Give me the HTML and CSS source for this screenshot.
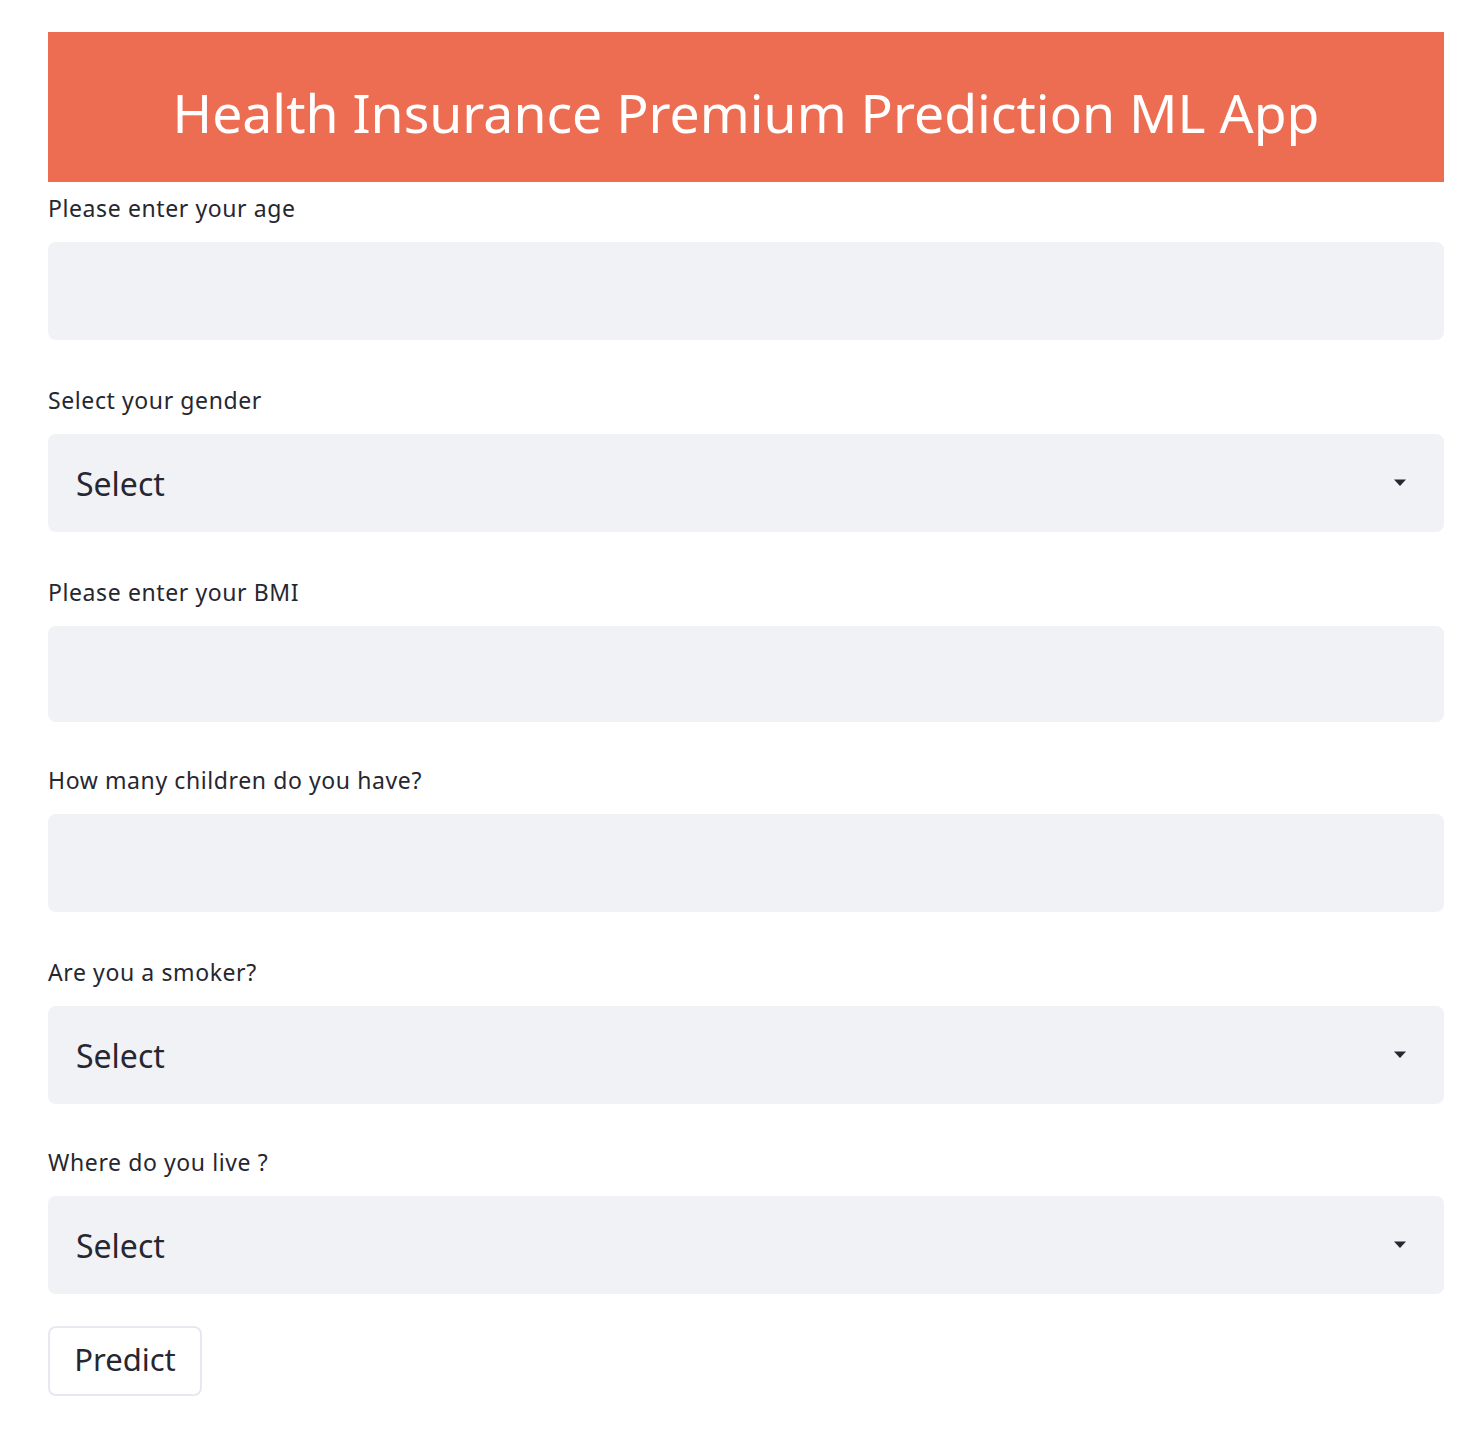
FILE: index.html
```html
<!DOCTYPE html>
<html lang="en">
<head>
<meta charset="utf-8">
<title>Health Insurance Premium Prediction ML App</title>
<link rel="stylesheet" href="styles.css">
</head>
<body>
<main class="app">
  <header class="banner">
    <h1 class="banner-title">Health Insurance Premium Prediction ML App</h1>
  </header>
  <form class="form">
    <div class="field field-first">
      <label class="field-label">Please enter your age</label>
      <div class="input-box"></div>
    </div>
    <div class="field">
      <label class="field-label">Select your gender</label>
      <div class="input-box select-box">
        <span class="select-value">Select</span>
        <svg class="caret" width="14" height="8" viewBox="0 0 14 8"><path d="M1 0.5h12L7 7z" fill="#262730"/></svg>
      </div>
    </div>
    <div class="field">
      <label class="field-label">Please enter your BMI</label>
      <div class="input-box input-short"></div>
    </div>
    <div class="field field-tight">
      <label class="field-label">How many children do you have?</label>
      <div class="input-box"></div>
    </div>
    <div class="field">
      <label class="field-label">Are you a smoker?</label>
      <div class="input-box select-box">
        <span class="select-value">Select</span>
        <svg class="caret" width="14" height="8" viewBox="0 0 14 8"><path d="M1 0.5h12L7 7z" fill="#262730"/></svg>
      </div>
    </div>
    <div class="field field-tight">
      <label class="field-label">Where do you live ?</label>
      <div class="input-box select-box">
        <span class="select-value">Select</span>
        <svg class="caret" width="14" height="8" viewBox="0 0 14 8"><path d="M1 0.5h12L7 7z" fill="#262730"/></svg>
      </div>
    </div>
    <div class="actions">
      <button type="button" class="btn">Predict</button>
    </div>
  </form>
</main>
</body>
</html>
```
FILE: styles.css
```css
* { box-sizing: border-box; }
html, body { margin: 0; padding: 0; background: #ffffff; }
body {
  font-family: "Noto Sans", "Open Sans", sans-serif;
  color: #262730;
}
.app {
  padding: 32px 38px 40px 48px;
}
.banner {
  background: #ed6d53;
  height: 150px;
  display: flex;
  align-items: center;
  justify-content: center;
}
.banner-title {
  margin: 0;
  color: #ffffff;
  font-weight: 400;
  font-size: 53.5px;
  line-height: 1;
  padding-top: 12px;
}
.form {
  display: flex;
  flex-direction: column;
}
.field { margin-top: 45px; display: flex; flex-direction: column; }
.field-first { margin-top: 11px; }
.field-tight { margin-top: 43px; }
.field-label {
  display: block;
  font-size: 23px;
  letter-spacing: 0.6px;
  line-height: 30px;
  height: 30px;
  margin-bottom: 19px;
  color: #262730;
}
.input-box {
  height: 98px;
  background: #f0f2f6;
  border-radius: 8px;
}
.input-short { height: 96px; }
.select-box {
  display: flex;
  align-items: center;
  justify-content: space-between;
  padding: 0 37px 0 28px;
}
.select-value {
  font-size: 32px;
  color: #262730;
}
.caret { display: block; }
.actions { margin-top: 32px; }
.btn {
  font-family: inherit;
  font-size: 31px;
  color: #262730;
  background: #ffffff;
  border: 2px solid #e6e9ef;
  border-radius: 8px;
  width: 154px;
  height: 70px;
  padding: 0 0 4px;
}
```
